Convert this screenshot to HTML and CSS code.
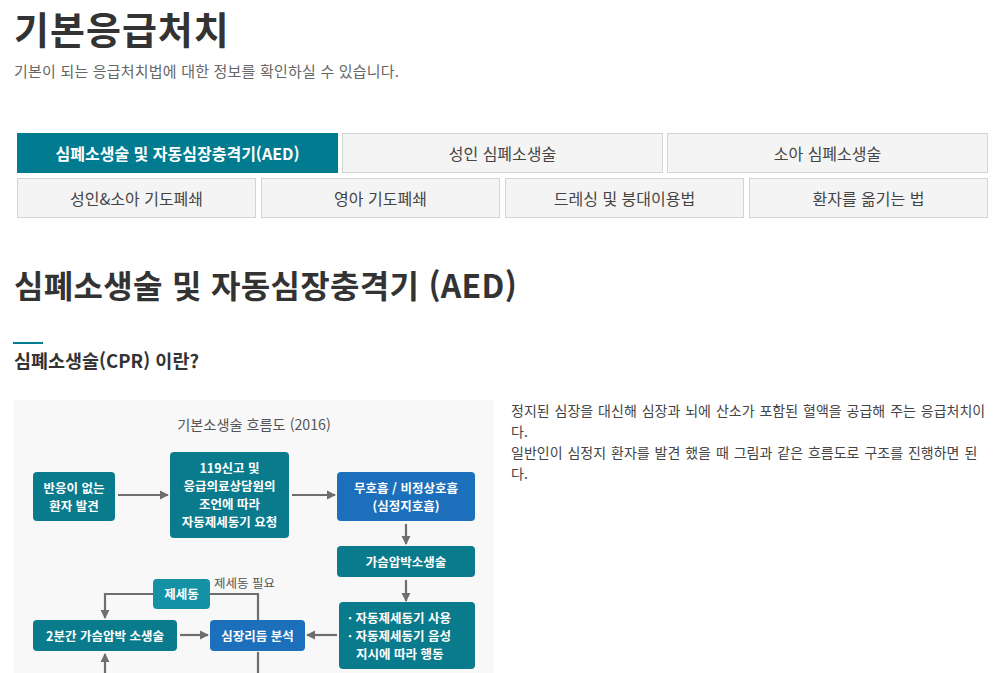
FILE: index.html
```html
<!DOCTYPE html>
<html lang="ko">
<head>
<meta charset="utf-8">
<title>기본응급처치</title>
<link rel="stylesheet" href="styles.css">
</head>
<body>
<header class="page-head">
  <h1 class="page-title">기본응급처치</h1>
  <p class="page-desc">기본이 되는 응급처치법에 대한 정보를 확인하실 수 있습니다.</p>
</header>

<nav class="tabs">
  <div class="tab-row tab-row-3">
    <a class="tab tab-active">심폐소생술 및 자동심장충격기(AED)</a>
    <a class="tab">성인 심폐소생술</a>
    <a class="tab">소아 심폐소생술</a>
  </div>
  <div class="tab-row tab-row-4">
    <a class="tab">성인&amp;소아 기도폐쇄</a>
    <a class="tab">영아 기도폐쇄</a>
    <a class="tab">드레싱 및 붕대이용법</a>
    <a class="tab">환자를 옮기는 법</a>
  </div>
</nav>

<h2 class="section-title">심폐소생술 및 자동심장충격기 (AED)</h2>
<div class="sub-line"></div>
<h3 class="sub-title">심폐소생술(CPR) 이란?</h3>

<section class="content">
  <div class="flow">
    <div class="flow-title">기본소생술 흐름도 (2016)</div>
    <svg class="flow-lines" width="480" height="320" viewBox="0 0 480 320">
      <defs>
        <marker id="ah" viewBox="0 0 10 10" refX="9" refY="5" markerWidth="4.2" markerHeight="4.2" orient="auto">
          <path d="M0 0 L10 5 L0 10 Z" fill="#6e6e6e"/>
        </marker>
      </defs>
      <g stroke="#6e6e6e" stroke-width="2.2" fill="none">
        <path d="M104 95 H154" marker-end="url(#ah)"/>
        <path d="M278 95 H321" marker-end="url(#ah)"/>
        <path d="M392 124 V144" marker-end="url(#ah)"/>
        <path d="M392 180 V201" marker-end="url(#ah)"/>
        <path d="M323 235 H293" marker-end="url(#ah)"/>
        <path d="M244 220 V194 H196"/>
        <path d="M139 194 H91 V218" marker-end="url(#ah)"/>
        <path d="M166 235 H194" marker-end="url(#ah)"/>
        <path d="M91 320 V254" marker-end="url(#ah)"/>
        <path d="M244 252 V320"/>
      </g>
    </svg>
    <div class="node teal n1">반응이 없는<br>환자 발견</div>
    <div class="node teal n2">119신고 및<br>응급의료상담원의<br>조언에 따라<br>자동제세동기 요청</div>
    <div class="node blue n3">무호흡 / 비정상호흡<br>(심정지호흡)</div>
    <div class="node teal n4">가슴압박소생술</div>
    <div class="node teal n5">
      <span class="bullet">· 자동제세동기 사용</span>
      <span class="bullet">· 자동제세동기 음성<br>지시에 따라 행동</span>
    </div>
    <div class="node blue n6">심장리듬 분석</div>
    <div class="node teal n7">2분간 가슴압박 소생술</div>
    <div class="node light n8">제세동</div>
    <div class="flow-label l1">제세동 필요</div>
  </div>
  <div class="desc">
    <p>정지된 심장을 대신해 심장과 뇌에 산소가 포함된 혈액을 공급해 주는 응급처치이다.<br>일반인이 심정지 환자를 발견 했을 때 그림과 같은 흐름도로 구조를 진행하면 된다.</p>
  </div>
</section>
</body>
</html>
```

FILE: styles.css
```css
html, body {
  margin: 0;
  padding: 0;
  background: #fff;
}
body {
  padding: 0 14px;
  font-family: "Noto Sans CJK KR", "Noto Sans", sans-serif;
  color: #333;
}
.page-title {
  margin: 0;
  font-size: 38px;
  letter-spacing: 1px;
  line-height: 55px;
  font-weight: 700;
  color: #333;
}
.page-desc {
  margin: 6px 0 0;
  font-size: 15px;
  letter-spacing: 0.2px;
  line-height: 20px;
  color: #666;
}
.tabs {
  margin: 52px -4px 0 3px;
  display: flex;
  flex-direction: column;
  gap: 5px;
}
.tab-row {
  display: grid;
}
.tab-row-3 {
  grid-template-columns: repeat(3, 1fr);
  gap: 4px;
}
.tab-row-4 {
  grid-template-columns: repeat(4, 1fr);
  gap: 5px;
}
.tab {
  height: 40px;
  box-sizing: border-box;
  display: flex;
  align-items: center;
  justify-content: center;
  background: #f4f4f4;
  border: 1px solid #d4d4d4;
  font-size: 16px;
  color: #444;
  text-decoration: none;
}
.tab-active {
  background: #007b8f;
  border-color: #007b8f;
  color: #fff;
  font-weight: 700;
}
.section-title {
  margin: 46px 0 0;
  font-size: 32px;
  letter-spacing: 0.3px;
  line-height: 40px;
  font-weight: 700;
  color: #333;
}
.sub-line {
  margin: 38px 0 0 -1px;
  width: 30px;
  height: 2px;
  background: #007b8f;
}
.sub-title {
  margin: 4px 0 0;
  font-size: 18.5px;
  line-height: 24px;
  font-weight: 700;
  color: #333;
}
.content {
  margin-top: 28px;
  display: flex;
  align-items: flex-start;
  gap: 17px;
}
.flow {
  position: relative;
  flex: none;
  width: 480px;
  height: 320px;
  background: #f8f8f8;
}
.flow-lines {
  position: absolute;
  left: 0;
  top: 0;
}
.flow-title {
  position: absolute;
  left: 0;
  right: 0;
  top: 14px;
  text-align: center;
  font-size: 14.2px;
  line-height: 20px;
  color: #555;
}
.node {
  position: absolute;
  box-sizing: border-box;
  display: flex;
  flex-direction: column;
  align-items: center;
  justify-content: center;
  text-align: center;
  border-radius: 4px;
  color: #fff;
  font-weight: 700;
  font-size: 12.5px;
  line-height: 18px;
}
.teal { background: #0a7b8d; }
.blue { background: #1c6fba; }
.light { background: #1591a6; }
.n1 { left: 19px; top: 72px; width: 82px; height: 49px; }
.n2 { left: 156px; top: 52px; width: 119px; height: 86px; }
.n3 { left: 323px; top: 72px; width: 138px; height: 49px; }
.n4 { left: 323px; top: 146px; width: 138px; height: 31px; }
.n5 {
  left: 325px; top: 202px; width: 136px; height: 67px;
  align-items: flex-start;
  text-align: left;
  padding-left: 9px;
}
.bullet {
  display: block;
  padding-left: 8px;
  text-indent: -8px;
}
.n6 { left: 196px; top: 220px; width: 95px; height: 31px; }
.n7 { left: 19px; top: 220px; width: 144px; height: 31px; }
.n8 { left: 139px; top: 179px; width: 57px; height: 30px; }
.flow-label {
  position: absolute;
  font-size: 12.5px;
  line-height: 16px;
  color: #555;
}
.l1 { left: 200px; top: 175px; }
.desc {
  width: 476px;
  flex: none;
}
.desc p {
  margin: 0;
  font-size: 14px;
  line-height: 21px;
  word-spacing: 1px;
  color: #444;
}
```
